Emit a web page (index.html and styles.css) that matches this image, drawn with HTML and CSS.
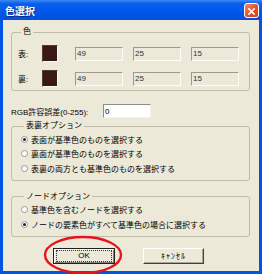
FILE: index.html
```html
<!DOCTYPE html>
<html lang="ja">
<head>
    <meta charset="UTF-8">
    <title>色選択</title>
    <link rel="stylesheet" href="styles.css">
</head>
<body>

    <div class="window">
        <div class="titlebar">
            <span class="title">色選択</span>
            <span class="close">
                <svg width="15" height="15" viewBox="0 0 15 15">
                    <path d="M4.5 4.5 L10.5 10.5 M10.5 4.5 L4.5 10.5" stroke="#fff" stroke-width="1.8" stroke-linecap="square"/>
                </svg>
            </span>
        </div>

        <div class="client">
            <fieldset class="group group-color">
                <legend>色</legend>
                <div class="color-row">
                    <span class="row-label">表:</span>
                    <span class="swatch"></span>
                    <input class="num" value="49" readonly>
                    <input class="num" value="25" readonly>
                    <input class="num" value="15" readonly>
                </div>
                <div class="color-row">
                    <span class="row-label">裏:</span>
                    <span class="swatch"></span>
                    <input class="num" value="49" readonly>
                    <input class="num" value="25" readonly>
                    <input class="num" value="15" readonly>
                </div>
            </fieldset>

            <div class="tolerance">
                <span class="tol-label">RGB許容誤差(0-255):</span>
                <input class="tol-input" value="0">
            </div>

            <fieldset class="group group-side">
                <legend>表裏オプション</legend>
                <div class="radio checked"><span class="dot"></span>表面が基準色のものを選択する</div>
                <div class="radio"><span class="dot"></span>裏面が基準色のものを選択する</div>
                <div class="radio"><span class="dot"></span>表裏の両方とも基準色のものを選択する</div>
            </fieldset>

            <fieldset class="group group-node">
                <legend>ノードオプション</legend>
                <div class="radio"><span class="dot"></span>基準色を含むノードを選択する</div>
                <div class="radio checked"><span class="dot"></span>ノードの要素色がすべて基準色の場合に選択する</div>
            </fieldset>

            <div class="buttons">
                <button class="btn btn-ok"><span class="focus">OK</span></button>
                <button class="btn btn-cancel">ｷｬﾝｾﾙ</button>
            </div>
        </div>

        <!-- red mark drawn over the OK button -->
        <svg class="mark" width="84" height="42" viewBox="0 0 84 42">
            <ellipse cx="42" cy="21" rx="38" ry="18" fill="none" stroke="#e8141b" stroke-width="2.4"/>
        </svg>
    </div>

</body>
</html>
```

FILE: styles.css
```css
body {
    margin: 0;
    font-family: "Liberation Sans", "Noto Sans CJK JP", sans-serif;
    font-size: 8px;
    color: #000;
}
.window {
    width: 262px;
    height: 274px;
    box-sizing: border-box;
    background: #0054e3;
    display: flex;
    flex-direction: column;
    position: relative;
    overflow: hidden;
}
.titlebar {
    height: 20px;
    flex: none;
    display: flex;
    align-items: center;
    justify-content: space-between;
    padding: 0 3px 0 5px;
    background: linear-gradient(#3d8bf5, #0a5fe8 18%, #0058ee 50%, #0050dc);
}
.title {
    color: #fff;
    font-weight: bold;
    font-size: 10px;
    text-shadow: 1px 1px 0 #0a2a80;
}
.close {
    width: 15px;
    height: 15px;
    box-sizing: border-box;
    border: 1px solid #fff;
    border-radius: 3px;
    background: linear-gradient(135deg, #f08a6c, #e0522a 55%, #c9431f);
    display: flex;
}
.client {
    flex: 1;
    margin: 0 3px 3px;
    background: #ece9d8;
    display: flex;
    flex-direction: column;
    padding: 0 9px 0 8px;
}
.group {
    margin: 0;
    border: 1px solid #bfbcab;
    border-radius: 3px;
    min-width: 0;
}
.group legend {
    padding: 0 2px;
    margin-left: 3px;
    line-height: 10px;
}
.group-color {
    margin-top: 7px;
    padding: 8px 0 3px 6px;
    display: flex;
    flex-direction: column;
    gap: 8px;
}
.color-row {
    height: 17px;
    display: flex;
    align-items: center;
}
.row-label {
    width: 25px;
}
.swatch {
    width: 17px;
    height: 17px;
    box-sizing: border-box;
    background: #3a1912;
    border: 1px solid;
    border-color: #5a3a30 #fdfcf8 #fdfcf8 #5a3a30;
    margin-right: 17px;
}
.num {
    width: 48px;
    height: 14px;
    box-sizing: border-box;
    margin: 0 10px 0 0;
    padding: 0 1px;
    font: inherit;
    color: #333;
    background: #ece9d8;
    border: 1px solid;
    border-color: #9c9a8e #fdfdfb #fdfdfb #9c9a8e;
    outline: none;
}
.tolerance {
    margin-top: 13px;
    height: 14px;
    display: flex;
    align-items: center;
}
.tol-label {
    width: 92px;
}
.tol-input {
    width: 48px;
    height: 14px;
    box-sizing: border-box;
    margin: 0;
    padding: 0 1px;
    font: inherit;
    background: #fff;
    border: 1px solid;
    border-color: #8f8e86 #f4f3ee #f4f3ee #8f8e86;
    outline: none;
}
.group-side {
    margin-top: 3px;
    padding: 1px 0 4px 9px;
}
.group-side .radio {
    height: 14.5px;
}
.group-node {
    margin-top: 11px;
    padding: 0 0 4px 9px;
}
.group-node .radio {
    height: 15px;
}
.radio {
    display: flex;
    align-items: center;
}
.dot {
    width: 7px;
    height: 7px;
    box-sizing: border-box;
    border: 1px solid #9a9a94;
    border-radius: 50%;
    background: #fff;
    margin-right: 3px;
    display: flex;
    align-items: center;
    justify-content: center;
}
.checked .dot::after {
    content: "";
    width: 3px;
    height: 3px;
    border-radius: 50%;
    background: #222;
}
.buttons {
    margin-top: 11px;
    padding-left: 42px;
    display: flex;
    gap: 28px;
}
.btn {
    height: 16px;
    box-sizing: border-box;
    padding: 0;
    font: inherit;
    color: #000;
    background: #ece9d8;
    border: 1px solid;
    border-color: #fff #404040 #404040 #fff;
    box-shadow: inset -1px -1px 0 #aca899;
    display: flex;
    align-items: center;
    justify-content: center;
}
.btn-ok {
    width: 62px;
    border-color: #202020;
    box-shadow: inset 1px 1px 0 #fff, inset -1px -1px 0 #808080;
}
.focus {
    width: 54px;
    height: 10px;
    border: 1px dotted #333;
    display: flex;
    align-items: center;
    justify-content: center;
}
.btn-cancel {
    width: 61px;
    letter-spacing: 1px;
}
.mark {
    position: absolute;
    left: 41px;
    top: 234px;
    overflow: visible;
}
```
